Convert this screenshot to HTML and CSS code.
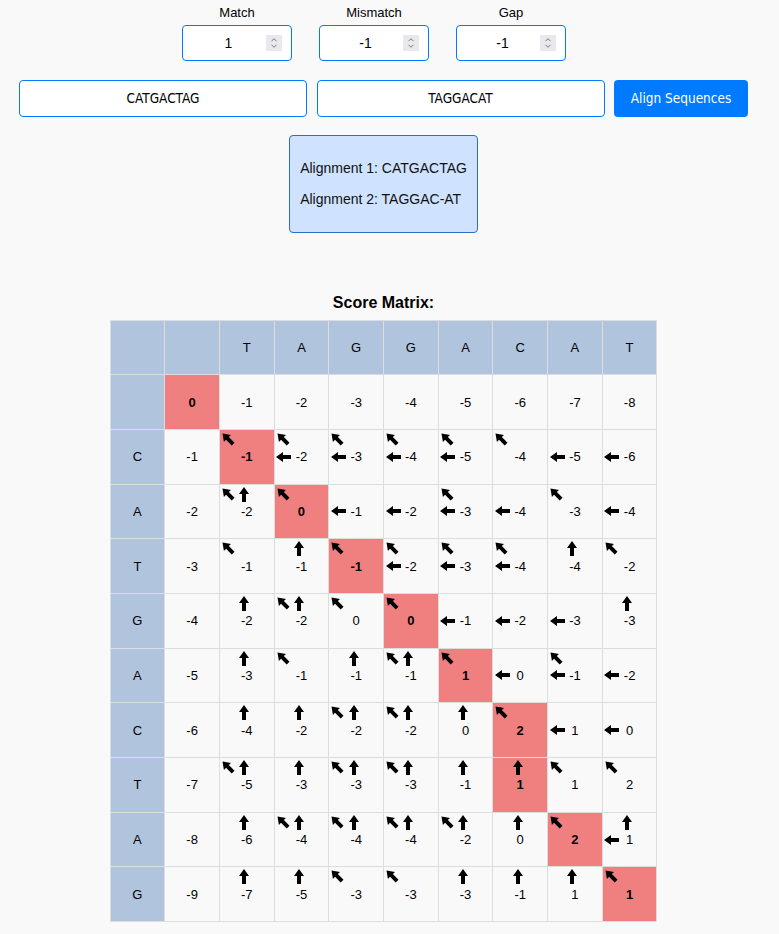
FILE: index.html
```html
<!DOCTYPE html>
<html>
<head>
<meta charset="utf-8">
<link rel="stylesheet" href="styles.css">
</head>
<body>
<svg class="defs" width="0" height="0" aria-hidden="true">
  <defs>
    <symbol id="au" viewBox="0 0 10 15"><path d="M5 0 L10 7 L7 7 L7 15 L3 15 L3 7 L0 7 Z"/></symbol>
    <symbol id="al" viewBox="0 0 15 10"><path d="M0 5 L7 0 L7 3 L15 3 L15 7 L7 7 L7 10 Z"/></symbol>
    <symbol id="ad" viewBox="0 0 13 13"><path d="M0.5 0.5 L8.99 1.91 L6.86 4.04 L12.52 9.69 L9.69 12.52 L4.04 6.86 L1.91 8.99 Z"/></symbol>
    <symbol id="sp" viewBox="0 0 16 16"><rect width="16" height="16" fill="#e9e9ed"/><path d="M5.5 6.2 L8 3.7 L10.5 6.2 M5.5 9.8 L8 12.3 L10.5 9.8" fill="none" stroke="#7a7a7a" stroke-width="1"/></symbol>
  </defs>
</svg>
<div class="app">
  <div class="params">
    <div class="param"><label>Match</label><div class="num"><input class="num-in" type="text" value="1"><svg class="spin"><use href="#sp"/></svg></div></div>
    <div class="param"><label>Mismatch</label><div class="num"><input class="num-in" type="text" value="-1"><svg class="spin"><use href="#sp"/></svg></div></div>
    <div class="param"><label>Gap</label><div class="num"><input class="num-in" type="text" value="-1"><svg class="spin"><use href="#sp"/></svg></div></div>
  </div>
  <div class="seqs">
    <input class="seq" type="text" value="CATGACTAG">
    <input class="seq" type="text" value="TAGGACAT">
    <button class="align">Align Sequences</button>
  </div>
  <div class="result">
    <p>Alignment 1: CATGACTAG</p>
    <p>Alignment 2: TAGGAC-AT</p>
  </div>
  <h3 class="title">Score Matrix:</h3>
  <table class="matrix">
    <tr><th></th><th></th><th>T</th><th>A</th><th>G</th><th>G</th><th>A</th><th>C</th><th>A</th><th>T</th></tr>
    <tr><th></th><td class="p">0</td><td>-1</td><td>-2</td><td>-3</td><td>-4</td><td>-5</td><td>-6</td><td>-7</td><td>-8</td></tr>
    <tr><th>C</th><td>-1</td>
      <td class="p"><div class="c"><svg class="d"><use href="#ad"/></svg><span class="n">-1</span></div></td>
      <td><div class="c"><svg class="d"><use href="#ad"/></svg><svg class="l"><use href="#al"/></svg><span class="n">-2</span></div></td>
      <td><div class="c"><svg class="d"><use href="#ad"/></svg><svg class="l"><use href="#al"/></svg><span class="n">-3</span></div></td>
      <td><div class="c"><svg class="d"><use href="#ad"/></svg><svg class="l"><use href="#al"/></svg><span class="n">-4</span></div></td>
      <td><div class="c"><svg class="d"><use href="#ad"/></svg><svg class="l"><use href="#al"/></svg><span class="n">-5</span></div></td>
      <td><div class="c"><svg class="d"><use href="#ad"/></svg><span class="n">-4</span></div></td>
      <td><div class="c"><svg class="l"><use href="#al"/></svg><span class="n">-5</span></div></td>
      <td><div class="c"><svg class="l"><use href="#al"/></svg><span class="n">-6</span></div></td>
    </tr>
    <tr><th>A</th><td>-2</td>
      <td><div class="c"><svg class="d"><use href="#ad"/></svg><svg class="u"><use href="#au"/></svg><span class="n">-2</span></div></td>
      <td class="p"><div class="c"><svg class="d"><use href="#ad"/></svg><span class="n">0</span></div></td>
      <td><div class="c"><svg class="l"><use href="#al"/></svg><span class="n">-1</span></div></td>
      <td><div class="c"><svg class="l"><use href="#al"/></svg><span class="n">-2</span></div></td>
      <td><div class="c"><svg class="d"><use href="#ad"/></svg><svg class="l"><use href="#al"/></svg><span class="n">-3</span></div></td>
      <td><div class="c"><svg class="l"><use href="#al"/></svg><span class="n">-4</span></div></td>
      <td><div class="c"><svg class="d"><use href="#ad"/></svg><span class="n">-3</span></div></td>
      <td><div class="c"><svg class="l"><use href="#al"/></svg><span class="n">-4</span></div></td>
    </tr>
    <tr><th>T</th><td>-3</td>
      <td><div class="c"><svg class="d"><use href="#ad"/></svg><span class="n">-1</span></div></td>
      <td><div class="c"><svg class="u"><use href="#au"/></svg><span class="n">-1</span></div></td>
      <td class="p"><div class="c"><svg class="d"><use href="#ad"/></svg><span class="n">-1</span></div></td>
      <td><div class="c"><svg class="d"><use href="#ad"/></svg><svg class="l"><use href="#al"/></svg><span class="n">-2</span></div></td>
      <td><div class="c"><svg class="d"><use href="#ad"/></svg><svg class="l"><use href="#al"/></svg><span class="n">-3</span></div></td>
      <td><div class="c"><svg class="d"><use href="#ad"/></svg><svg class="l"><use href="#al"/></svg><span class="n">-4</span></div></td>
      <td><div class="c"><svg class="u"><use href="#au"/></svg><span class="n">-4</span></div></td>
      <td><div class="c"><svg class="d"><use href="#ad"/></svg><span class="n">-2</span></div></td>
    </tr>
    <tr><th>G</th><td>-4</td>
      <td><div class="c"><svg class="u"><use href="#au"/></svg><span class="n">-2</span></div></td>
      <td><div class="c"><svg class="d"><use href="#ad"/></svg><svg class="u"><use href="#au"/></svg><span class="n">-2</span></div></td>
      <td><div class="c"><svg class="d"><use href="#ad"/></svg><span class="n">0</span></div></td>
      <td class="p"><div class="c"><svg class="d"><use href="#ad"/></svg><span class="n">0</span></div></td>
      <td><div class="c"><svg class="l"><use href="#al"/></svg><span class="n">-1</span></div></td>
      <td><div class="c"><svg class="l"><use href="#al"/></svg><span class="n">-2</span></div></td>
      <td><div class="c"><svg class="l"><use href="#al"/></svg><span class="n">-3</span></div></td>
      <td><div class="c"><svg class="u"><use href="#au"/></svg><span class="n">-3</span></div></td>
    </tr>
    <tr><th>A</th><td>-5</td>
      <td><div class="c"><svg class="u"><use href="#au"/></svg><span class="n">-3</span></div></td>
      <td><div class="c"><svg class="d"><use href="#ad"/></svg><span class="n">-1</span></div></td>
      <td><div class="c"><svg class="u"><use href="#au"/></svg><span class="n">-1</span></div></td>
      <td><div class="c"><svg class="d"><use href="#ad"/></svg><svg class="u"><use href="#au"/></svg><span class="n">-1</span></div></td>
      <td class="p"><div class="c"><svg class="d"><use href="#ad"/></svg><span class="n">1</span></div></td>
      <td><div class="c"><svg class="l"><use href="#al"/></svg><span class="n">0</span></div></td>
      <td><div class="c"><svg class="d"><use href="#ad"/></svg><svg class="l"><use href="#al"/></svg><span class="n">-1</span></div></td>
      <td><div class="c"><svg class="l"><use href="#al"/></svg><span class="n">-2</span></div></td>
    </tr>
    <tr><th>C</th><td>-6</td>
      <td><div class="c"><svg class="u"><use href="#au"/></svg><span class="n">-4</span></div></td>
      <td><div class="c"><svg class="u"><use href="#au"/></svg><span class="n">-2</span></div></td>
      <td><div class="c"><svg class="d"><use href="#ad"/></svg><svg class="u"><use href="#au"/></svg><span class="n">-2</span></div></td>
      <td><div class="c"><svg class="d"><use href="#ad"/></svg><svg class="u"><use href="#au"/></svg><span class="n">-2</span></div></td>
      <td><div class="c"><svg class="u"><use href="#au"/></svg><span class="n">0</span></div></td>
      <td class="p"><div class="c"><svg class="d"><use href="#ad"/></svg><span class="n">2</span></div></td>
      <td><div class="c"><svg class="l"><use href="#al"/></svg><span class="n">1</span></div></td>
      <td><div class="c"><svg class="l"><use href="#al"/></svg><span class="n">0</span></div></td>
    </tr>
    <tr><th>T</th><td>-7</td>
      <td><div class="c"><svg class="d"><use href="#ad"/></svg><svg class="u"><use href="#au"/></svg><span class="n">-5</span></div></td>
      <td><div class="c"><svg class="u"><use href="#au"/></svg><span class="n">-3</span></div></td>
      <td><div class="c"><svg class="d"><use href="#ad"/></svg><svg class="u"><use href="#au"/></svg><span class="n">-3</span></div></td>
      <td><div class="c"><svg class="d"><use href="#ad"/></svg><svg class="u"><use href="#au"/></svg><span class="n">-3</span></div></td>
      <td><div class="c"><svg class="u"><use href="#au"/></svg><span class="n">-1</span></div></td>
      <td class="p"><div class="c"><svg class="u"><use href="#au"/></svg><span class="n">1</span></div></td>
      <td><div class="c"><svg class="d"><use href="#ad"/></svg><span class="n">1</span></div></td>
      <td><div class="c"><svg class="d"><use href="#ad"/></svg><span class="n">2</span></div></td>
    </tr>
    <tr><th>A</th><td>-8</td>
      <td><div class="c"><svg class="u"><use href="#au"/></svg><span class="n">-6</span></div></td>
      <td><div class="c"><svg class="d"><use href="#ad"/></svg><svg class="u"><use href="#au"/></svg><span class="n">-4</span></div></td>
      <td><div class="c"><svg class="d"><use href="#ad"/></svg><svg class="u"><use href="#au"/></svg><span class="n">-4</span></div></td>
      <td><div class="c"><svg class="d"><use href="#ad"/></svg><svg class="u"><use href="#au"/></svg><span class="n">-4</span></div></td>
      <td><div class="c"><svg class="d"><use href="#ad"/></svg><svg class="u"><use href="#au"/></svg><span class="n">-2</span></div></td>
      <td><div class="c"><svg class="u"><use href="#au"/></svg><span class="n">0</span></div></td>
      <td class="p"><div class="c"><svg class="d"><use href="#ad"/></svg><span class="n">2</span></div></td>
      <td><div class="c"><svg class="u"><use href="#au"/></svg><svg class="l"><use href="#al"/></svg><span class="n">1</span></div></td>
    </tr>
    <tr><th>G</th><td>-9</td>
      <td><div class="c"><svg class="u"><use href="#au"/></svg><span class="n">-7</span></div></td>
      <td><div class="c"><svg class="u"><use href="#au"/></svg><span class="n">-5</span></div></td>
      <td><div class="c"><svg class="d"><use href="#ad"/></svg><span class="n">-3</span></div></td>
      <td><div class="c"><svg class="d"><use href="#ad"/></svg><span class="n">-3</span></div></td>
      <td><div class="c"><svg class="u"><use href="#au"/></svg><span class="n">-3</span></div></td>
      <td><div class="c"><svg class="u"><use href="#au"/></svg><span class="n">-1</span></div></td>
      <td><div class="c"><svg class="u"><use href="#au"/></svg><span class="n">1</span></div></td>
      <td class="p"><div class="c"><svg class="d"><use href="#ad"/></svg><span class="n">1</span></div></td>
    </tr>
  </table>
</div>
</body>
</html>
```

FILE: styles.css
```css
body {
  margin: 0;
  background: #f9f9f9;
  font-family: "Liberation Sans", Arial, sans-serif;
  color: #000;
}

.defs {
  position: absolute;
  width: 0;
  height: 0;
  overflow: hidden;
}

.app {
  width: 767px;
}

.params {
  display: flex;
  justify-content: center;
  gap: 27px;
  padding: 5px 19px 0 0;
}

.param {
  display: flex;
  flex-direction: column;
  align-items: center;
  width: 110px;
}

.param label {
  font-size: 13px;
  line-height: 15px;
  margin-bottom: 5px;
}

.num {
  box-sizing: border-box;
  width: 110px;
  height: 36px;
  border: 1px solid #007bff;
  border-radius: 4px;
  background: #fff;
  display: flex;
  align-items: center;
  padding: 0 9px 0 8px;
}

.num-in {
  flex: 1;
  min-width: 0;
  border: 0;
  padding: 0;
  background: transparent;
  text-align: center;
  font-family: "Liberation Sans", Arial, sans-serif;
  font-size: 14px;
  color: #000;
  outline: none;
}

.spin {
  width: 16px;
  height: 16px;
  flex: none;
}

.seqs {
  display: flex;
  gap: 9.5px;
  padding: 0 19px;
  margin-top: 18.5px;
}

.seq {
  flex: 1;
  min-width: 0;
  box-sizing: border-box;
  height: 37px;
  border: 1px solid #007bff;
  border-radius: 4px;
  background: #fff;
  text-align: center;
  font-family: "Liberation Sans Narrow", "DejaVu Sans Condensed", Arial, sans-serif;
  font-size: 13.5px;
  color: #000;
  padding: 0 8px;
  outline: none;
}

.align {
  flex: none;
  width: 134px;
  height: 37px;
  border: 0;
  border-radius: 4px;
  background: #007bff;
  color: #fff;
  font-family: "Liberation Sans Narrow", "DejaVu Sans Condensed", Arial, sans-serif;
  font-size: 13.5px;
  padding: 0;
}

.result {
  width: fit-content;
  margin: 18px auto 0;
  padding: 10px;
  background: #cfe2ff;
  border: 1px solid #2a6fc9;
  border-radius: 4px;
  font-size: 14px;
  line-height: 17px;
  color: #111;
}

.result p {
  margin: 14px 0;
}

.title {
  margin: 60px 0 8px;
  text-align: center;
  font-size: 16px;
  line-height: 19px;
  font-weight: bold;
}

.matrix {
  margin: 0 auto;
  border-collapse: collapse;
}

.matrix th,
.matrix td {
  border: 1px solid #ddd;
  width: 53.7px;
  height: 53.7px;
  padding: 0;
  text-align: center;
  vertical-align: middle;
  font-size: 13px;
  font-weight: normal;
}

.matrix th {
  background: #b0c4de;
}

.matrix td.p {
  background: #f08080;
  font-weight: bold;
}

.c {
  display: grid;
  grid-template-columns: 18px 1fr 18px;
  grid-template-rows: 19px 1fr 19px;
  height: 53.7px;
}

.c svg {
  fill: #000;
  align-self: center;
}

.c .d {
  grid-area: 1 / 1;
  width: 13px;
  height: 13px;
  justify-self: start;
  margin-left: 2px;
}

.c .u {
  grid-area: 1 / 2;
  width: 10px;
  height: 15px;
  justify-self: center;
  margin-right: 5px;
}

.c .l {
  grid-area: 2 / 1;
  width: 15px;
  height: 10px;
  justify-self: start;
  margin-left: 1.5px;
}

.c .n {
  grid-area: 2 / 2;
  align-self: center;
  justify-self: center;
  line-height: 15px;
  white-space: nowrap;
}
```
